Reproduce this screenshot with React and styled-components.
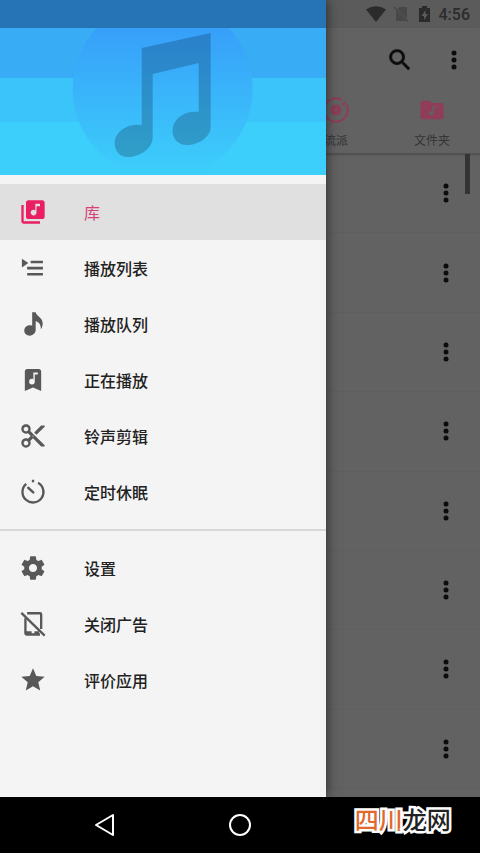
import React from 'react';
import styled, { createGlobalStyle } from 'styled-components';

const GlobalStyle = createGlobalStyle`
    * {
        box-sizing: border-box;
    }

    body {
        margin: 0;
        background: #000;
        font-family: Roboto, 'Noto Sans CJK SC', sans-serif;
    }

    button {
        border: 0;
        padding: 0;
        background: none;
        font: inherit;
        color: inherit;
        cursor: pointer;
    }
`;

const paths = {
    library: 'M20 2H8c-1.100 0-2 .9-2 2v12c0 1.100.9 2 2 2h12c1.100 0 2-.9 2-2V4c0-1.100-.9-2-2-2zm-2 5h-3v5.500c0 1.380-1.120 2.500-2.500 2.500S10 13.880 10 12.500s1.120-2.500 2.500-2.500c.57 0 1.080.19 1.500.51V5h4v2zM4 6H2v14c0 1.100.9 2 2 2h14v-2H4V6z',
    playlist: 'M2.500 4l5.500 3.800-5.500 3.800zM10 5.800h10.500v2.200H10zM7 11h13.500v2.200H7zM7 16.200h13.500v2.200H7z',
    queue: 'M11.300 2h3c.3 3.300 6 4.300 6 9.500 0 2.200-.6 3.800-1.600 5 .2-3.800-1.400-6.200-4.400-6.800V17c0 2.700-2.200 5-5.100 5-2.600 0-4.700-1.700-4.700-4.200 0-2.700 2.100-4.700 4.800-4.700.8 0 1.400.1 2 .4z',
    playing: 'M7 2.500h10c1.100 0 2 .9 2 2V21.500l-7-3-7 3V4.500c0-1.100.9-2 2-2zm5.300 3v5.800c-.4-.2-.8-.3-1.200-.3a2.400 2.400 0 1 0 2.400 2.400V7.300h2.600V5.500z',
    cut: 'M9.640 7.640c.23-.5.360-1.050.360-1.640 0-2.210-1.790-4-4-4S2 3.790 2 6s1.790 4 4 4c.59 0 1.140-.13 1.640-.36L10 12l-2.360 2.360C7.140 14.130 6.590 14 6 14c-2.210 0-4 1.790-4 4s1.790 4 4 4 4-1.790 4-4c0-.59-.13-1.140-.36-1.640L12 14l7 7h3v-1L9.640 7.640zM6 8c-1.100 0-2-.89-2-2s.9-2 2-2 2 .89 2 2-.9 2-2 2zm0 12c-1.100 0-2-.89-2-2s.9-2 2-2 2 .89 2 2-.9 2-2 2zm6-7.500c-.28 0-.5-.22-.5-.5s.22-.5.500-.5.500.22.500.5-.22.500-.5.500zM19 3l-6 6 2 2 7-7V3z',
    settings: 'M19.430 12.980c.04-.32.070-.64.070-.98s-.03-.66-.07-.98l2.110-1.650c.19-.15.240-.42.120-.64l-2-3.460c-.12-.22-.39-.3-.61-.22l-2.490 1c-.52-.4-1.080-.73-1.690-.98l-.38-2.650C14.460 2.180 14.250 2 14 2h-4c-.25 0-.46.180-.49.420l-.38 2.650c-.61.250-1.170.590-1.690.980l-2.490-1c-.23-.09-.49 0-.61.220l-2 3.460c-.13.220-.07.490.120.640l2.110 1.650c-.04.320-.07.650-.07.980s.03.660.070.980l-2.110 1.650c-.19.150-.24.420-.12.640l2 3.460c.12.220.390.300.610.220l2.490-1c.52.400 1.080.730 1.690.980l.38 2.650c.03.240.240.420.490.420h4c.25 0 .46-.18.490-.42l.38-2.650c.61-.25 1.170-.59 1.690-.98l2.490 1c.23.090.490 0 .61-.22l2-3.460c.12-.22.070-.49-.12-.64l-2.110-1.650zM12 15.500c-1.930 0-3.500-1.570-3.500-3.500s1.570-3.500 3.500-3.500 3.500 1.570 3.500 3.500-1.570 3.500-3.500 3.500z',
    star: 'M12 17.270L18.180 21l-1.640-7.030L22 9.240l-7.190-.61L12 2 9.190 8.630 2 9.240l5.460 4.730L5.820 21z',
    folder: 'M20 6h-8l-2-2H4c-1.100 0-2 .9-2 2v12c0 1.100.9 2 2 2h16c1.100 0 2-.9 2-2V8c0-1.100-.9-2-2-2zm-4 4.500h-2.500v4.200a1.900 1.900 0 1 1-1.200-1.700V9H16z',
    search: 'M15.500 14h-.79l-.28-.27C15.410 12.590 16 11.110 16 9.500 16 5.910 13.090 3 9.500 3S3 5.910 3 9.500 5.910 16 9.500 16c1.610 0 3.090-.59 4.230-1.570l.27.280v.79l5 4.990L20.490 19l-4.990-5zm-6 0C7.010 14 5 11.990 5 9.500S7.010 5 9.500 5 14 7.010 14 9.500 11.990 14 9.500 14z',
};

const drawings = {
    timer: (
        <g fill="none" stroke="currentColor" strokeWidth="2">
            <path d="M16.300 4.100A9 9 0 1 1 6.200 5.100" />
            <path d="M8 8.500l4.200 3.800" strokeWidth="2.200" strokeLinecap="round" />
            <path d="M12 1.500v2.200" />
        </g>
    ),
    noAds: (
        <g fill="none" stroke="currentColor" strokeWidth="2">
            <path d="M7 2.800h11a1 1 0 0 1 1 1v12.500" />
            <path d="M5.500 7v13a1 1 0 0 0 1 1H18" />
            <path d="M5.500 19.800h5.300M13.200 19.800h4" strokeWidth="3.200" />
            <path d="M2 2.500l20 19.500" />
        </g>
    ),
    genre: (
        <g fill="none" stroke="currentColor" strokeWidth="1.800">
            <path d="M17 3.400A10 10 0 1 0 20.800 7.300M17.300 8l3.200-3" />
            <circle cx="12" cy="12" r="2.900" strokeWidth="3.600" />
        </g>
    ),
};

function Icon({ name, size = 28 }) {
    return (
        <svg width={size} height={size} viewBox="0 0 24 24" fill="currentColor" aria-hidden="true">
            {drawings[name] || <path fillRule="evenodd" d={paths[name]} />}
        </svg>
    );
}

function SearchIcon() {
    return (
        <svg width="28" height="28" viewBox="0 0 24 24" fill="currentColor" aria-hidden="true">
            <path d={paths.search} stroke="currentColor" strokeWidth="0.500" />
        </svg>
    );
}

function Dots() {
    return (
        <svg width="8" height="22" viewBox="0 0 8 22" fill="currentColor" aria-hidden="true">
            <circle cx="4" cy="4" r="2.500" />
            <circle cx="4" cy="11" r="2.500" />
            <circle cx="4" cy="18" r="2.500" />
        </svg>
    );
}

const mainItems = [
    { icon: 'library', label: '库', active: true },
    { icon: 'playlist', label: '播放列表' },
    { icon: 'queue', label: '播放队列' },
    { icon: 'playing', label: '正在播放' },
    { icon: 'cut', label: '铃声剪辑' },
    { icon: 'timer', label: '定时休眠' },
];

const moreItems = [
    { icon: 'settings', label: '设置' },
    { icon: 'noAds', label: '关闭广告' },
    { icon: 'star', label: '评价应用' },
];

const songs = [1, 2, 3, 4, 5, 6, 7, 8];

function StatusIcons() {
    return (
        <svg width="72" height="20" viewBox="0 0 72 20" aria-hidden="true">
            <path d="M1 5.500Q11 -1 21 5.500L11 18z" fill="#2b2b2b" />
            <path d="M35 3h7v11.500L32.500 5zM31 6.500V17h10z" fill="#484848" />
            <path d="M29 3l14 14.500" stroke="#484848" strokeWidth="1.500" />
            <path fillRule="evenodd" d="M57 2h5v2h3v14H54V4h3zm3.500 4L56.500 12H59v4l4-6h-2.500z" fill="#2b2b2b" />
        </svg>
    );
}

function MenuList({ items }) {
    return (
        <List>
            {items.map((item) => (
                <li key={item.label}>
                    <MenuLink href="#" $active={item.active}>
                        <Icon name={item.icon} />
                        <MenuLabel $active={item.active}>{item.label}</MenuLabel>
                    </MenuLink>
                </li>
            ))}
        </List>
    );
}

function Drawer() {
    return (
        <DrawerPanel>
            <DrawerStatus />
            <Cover>
                <svg width="100%" height="147" viewBox="0 0 327 147" preserveAspectRatio="xMidYMid slice" aria-hidden="true">
                    <defs>
                        <linearGradient id="disc" x1="0" y1="0" x2="0" y2="147" gradientUnits="userSpaceOnUse">
                            <stop offset="0" stopColor="#379ff9" />
                            <stop offset="1" stopColor="#3dcffb" />
                        </linearGradient>
                        <linearGradient id="note" x1="0" y1="5" x2="0" y2="130" gradientUnits="userSpaceOnUse">
                            <stop offset="0" stopColor="#2a80cb" />
                            <stop offset="1" stopColor="#309fc8" />
                        </linearGradient>
                    </defs>
                    <rect width="327" height="147" fill="#3dcffb" />
                    <rect width="327" height="94" fill="#3bc4fa" />
                    <rect width="327" height="50" fill="#38adf6" />
                    <circle cx="163" cy="61" r="90" fill="url(#disc)" />
                    <path
                        d="M142 20L211 5V99C211 109 199 117 187 117C178 117 172 110 173 101C174 89 187 82 199 84V35L153 46V109C153 121 140 129 128 129C120 129 115 123 115 115C115 103 129 95 142 97Z"
                        fill="url(#note)"
                    />
                </svg>
            </Cover>
            <Menu aria-label="菜单">
                <MenuList items={mainItems} />
                <Divider />
                <MenuList items={moreItems} />
            </Menu>
        </DrawerPanel>
    );
}

function App() {
    return (
        <Screen>
            <GlobalStyle />
            <Body>
                <StatusBar>
                    <StatusIcons />
                    <span>4:56</span>
                </StatusBar>
                <Header>
                    <Toolbar>
                        <ToolButton aria-label="搜索">
                            <SearchIcon />
                        </ToolButton>
                        <ToolButton aria-label="更多">
                            <Dots />
                        </ToolButton>
                    </Toolbar>
                    <Tabs>
                        <Tab>
                            <Icon name="genre" />
                            <TabLabel>流派</TabLabel>
                        </Tab>
                        <Tab>
                            <Icon name="folder" />
                            <TabLabel>文件夹</TabLabel>
                        </Tab>
                    </Tabs>
                </Header>
                <SongList>
                    {songs.map((song) => (
                        <SongRow key={song}>
                            <ToolButton aria-label="更多">
                                <Dots />
                            </ToolButton>
                        </SongRow>
                    ))}
                    <ScrollThumb />
                </SongList>
                <Drawer />
            </Body>
            <NavBar>
                <NavButton aria-label="返回">
                    <svg width="24" height="24" viewBox="0 0 24 24" fill="none" stroke="#fff" strokeWidth="2" strokeLinejoin="round">
                        <path d="M19 2v20L2 12z" />
                    </svg>
                </NavButton>
                <NavButton aria-label="主屏幕">
                    <svg width="24" height="24" viewBox="0 0 24 24" fill="none" stroke="#fff" strokeWidth="2">
                        <circle cx="12" cy="12" r="10" />
                    </svg>
                </NavButton>
                <Brand>
                    <em>四川</em>龙网
                </Brand>
            </NavBar>
        </Screen>
    );
}

const Screen = styled.div`
    min-height: 100vh;
    display: flex;
    flex-direction: column;
`;

const Body = styled.main`
    position: relative;
    flex: 1;
    display: flex;
    flex-direction: column;
    min-height: 720px;
    background: #626262;
    color: #0c0c0c;
`;

const StatusBar = styled.div`
    height: 28px;
    padding-right: 10px;
    display: flex;
    align-items: center;
    justify-content: flex-end;
    gap: 2px;
    background: #5b5b5b;
    color: #2b2b2b;
    font-size: 16px;
    font-weight: 500;
`;

const Header = styled.header`
    border-bottom: 1px solid #505050;
    box-shadow: 0 1px 2px rgba(0, 0, 0, 0.2);
`;

const Toolbar = styled.div`
    height: 64px;
    padding-right: 6px;
    display: flex;
    align-items: center;
    justify-content: flex-end;
    gap: 14px;
`;

const ToolButton = styled.button`
    width: 40px;
    height: 40px;
    display: flex;
    align-items: center;
    justify-content: center;
`;

const Tabs = styled.div`
    height: 61px;
    display: flex;
    justify-content: flex-end;
`;

const Tab = styled.button`
    width: 20%;
    padding: 4px 0;
    display: flex;
    flex-direction: column;
    align-items: center;
    justify-content: space-between;
    color: #8f3d59;
`;

const TabLabel = styled.span`
    color: #353535;
    font-size: 12px;
    line-height: 16px;
`;

const SongList = styled.ul`
    position: relative;
    flex: 1;
    display: flex;
    flex-direction: column;
    margin: 0;
    padding: 0 0 8px;
    list-style: none;
`;

const SongRow = styled.li`
    flex: 1;
    padding-right: 14px;
    display: flex;
    align-items: center;
    justify-content: flex-end;
    border-bottom: 1px solid #5f5f5f;
`;

const ScrollThumb = styled.div`
    position: absolute;
    top: 0;
    right: 10px;
    width: 5px;
    height: 40px;
    background: #333;
`;

const DrawerPanel = styled.aside`
    position: absolute;
    top: 0;
    bottom: 0;
    left: 0;
    width: 68%;
    background: #f4f4f4;
    box-shadow: 0 0 12px rgba(0, 0, 0, 0.6);
    clip-path: inset(0 -20px 0 0);
`;

const DrawerStatus = styled.div`
    height: 28px;
    background: #2674b5;
`;

const Cover = styled.div`
    height: 147px;

    svg {
        display: block;
    }
`;

const Menu = styled.nav`
    padding-top: 9px;
`;

const List = styled.ul`
    margin: 0;
    padding: 0;
    list-style: none;
`;

const MenuLink = styled.a`
    height: 56px;
    padding-left: 19px;
    display: flex;
    align-items: center;
    gap: 37px;
    background: ${(props) => (props.$active ? '#e0e0e0' : 'transparent')};
    color: ${(props) => (props.$active ? '#e91e63' : '#585858')};
    text-decoration: none;
`;

const MenuLabel = styled.span`
    color: ${(props) => (props.$active ? '#d6427a' : '#212121')};
    font-size: 16px;
    font-weight: ${(props) => (props.$active ? 400 : 500)};
`;

const Divider = styled.hr`
    height: 2px;
    margin: 9px 0;
    border: 0;
    background: #d8d8d8;
`;

const NavBar = styled.footer`
    height: 56px;
    display: grid;
    grid-template-columns: 15% 14% 42% 29%;
    align-items: center;
    background: #000;
`;

const NavButton = styled.button`
    height: 48px;
    grid-row: 1;
    display: flex;
    align-items: center;
    justify-content: center;

    &:nth-child(1) {
        grid-column: 2;
    }

    &:nth-child(2) {
        grid-column: 3;
    }
`;

const Brand = styled.strong`
    grid-row: 1;
    grid-column: 4;
    padding: 0 0 8px 14px;
    color: #222;
    font-size: 24px;
    font-weight: 500;
    line-height: 32px;
    white-space: nowrap;
    -webkit-text-stroke: 5px #fff;
    paint-order: stroke fill;

    em {
        color: #e2692e;
        font-style: normal;
    }
`;

export default App;
